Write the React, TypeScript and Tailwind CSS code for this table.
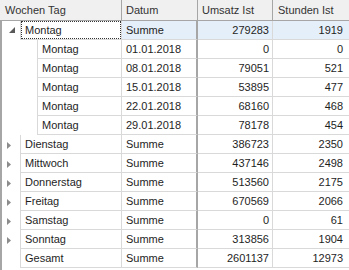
type Row = {
  name: string;
  datum: string;
  umsatz: string;
  stunden: string;
  level: 0 | 1;
  toggle?: 'open' | 'closed';
  selected?: boolean;
};

const rows: Row[] = [
  { name: 'Montag', datum: 'Summe', umsatz: '279283', stunden: '1919', level: 0, toggle: 'open', selected: true },
  { name: 'Montag', datum: '01.01.2018', umsatz: '0', stunden: '0', level: 1 },
  { name: 'Montag', datum: '08.01.2018', umsatz: '79051', stunden: '521', level: 1 },
  { name: 'Montag', datum: '15.01.2018', umsatz: '53895', stunden: '477', level: 1 },
  { name: 'Montag', datum: '22.01.2018', umsatz: '68160', stunden: '468', level: 1 },
  { name: 'Montag', datum: '29.01.2018', umsatz: '78178', stunden: '454', level: 1 },
  { name: 'Dienstag', datum: 'Summe', umsatz: '386723', stunden: '2350', level: 0, toggle: 'closed' },
  { name: 'Mittwoch', datum: 'Summe', umsatz: '437146', stunden: '2498', level: 0, toggle: 'closed' },
  { name: 'Donnerstag', datum: 'Summe', umsatz: '513560', stunden: '2175', level: 0, toggle: 'closed' },
  { name: 'Freitag', datum: 'Summe', umsatz: '670569', stunden: '2066', level: 0, toggle: 'closed' },
  { name: 'Samstag', datum: 'Summe', umsatz: '0', stunden: '61', level: 0, toggle: 'closed' },
  { name: 'Sonntag', datum: 'Summe', umsatz: '313856', stunden: '1904', level: 0, toggle: 'closed' },
  { name: 'Gesamt', datum: 'Summe', umsatz: '2601137', stunden: '12973', level: 0 },
];

function Toggle({ state }: { state?: 'open' | 'closed' }) {
  if (!state) return null;
  return (
    <svg width="18" height="18" viewBox="0 0 18 18" aria-hidden="true">
      {state === 'open' ? (
        <polygon points="7,12 13,12 13,6" fill="#595959" />
      ) : (
        <polygon points="5,7 9,10.5 5,14" fill="#8c8c8c" />
      )}
    </svg>
  );
}

function GridRow({ row }: { row: Row }) {
  const sel = row.selected ? 'bg-[#e5eff9]' : 'bg-white';
  return (
    <div className="flex h-[19px] leading-[18px]">
      <div className={row.level === 0 ? 'w-[18px] shrink-0' : 'w-[35px] shrink-0'}>
        {row.level === 0 && <Toggle state={row.toggle} />}
      </div>
      <div
        className={`relative shrink-0 border-l border-r border-b border-[#d9d9d9] pl-[4px] ${
          row.level === 0 ? 'w-[102px]' : 'w-[85px]'
        }`}
      >
        {row.selected && <span className="absolute inset-0 border border-dotted border-[#333]" />}
        {row.name}
      </div>
      <div className={`w-[76px] shrink-0 border-b border-[#d9d9d9] border-r-2 border-r-[#a6a6a6] pl-[4px] ${sel}`}>
        {row.datum}
      </div>
      <div className={`w-[75px] shrink-0 border-b border-r border-[#d9d9d9] pr-[3px] text-right ${sel}`}>
        {row.umsatz}
      </div>
      <div className={`flex-1 border-b border-[#d9d9d9] pr-[6px] text-right ${sel}`}>{row.stunden}</div>
    </div>
  );
}

export default function App() {
  return (
    <div className="w-[349px] h-[270px] overflow-hidden bg-white text-[11px] text-[#1e1e1e] font-['Liberation_Sans',Arial,sans-serif]">
      <div className="flex h-[21px] leading-[20px] bg-[#f0f0f0] border-b border-[#a6a6a6] text-[#333]">
        <div className="w-[122px] shrink-0 border-r border-[#a6a6a6] pl-[5px]">Wochen Tag</div>
        <div className="w-[76px] shrink-0 border-r border-[#a6a6a6] pl-[4px]">Datum</div>
        <div className="w-[75px] shrink-0 border-r border-[#a6a6a6] pl-[4px]">Umsatz Ist</div>
        <div className="flex-1 pl-[5px]">Stunden Ist</div>
      </div>
      <div className="h-[249px] border-l-2 border-[#a6a6a6]">
        {rows.map((r, i) => (
          <GridRow key={i} row={r} />
        ))}
      </div>
    </div>
  );
}
